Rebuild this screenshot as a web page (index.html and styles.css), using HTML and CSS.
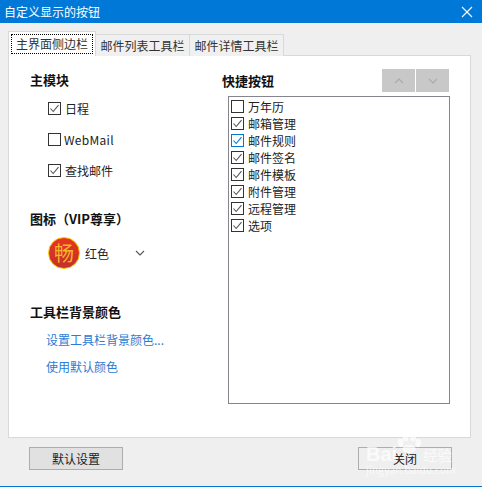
FILE: index.html
```html
<!DOCTYPE html>
<html lang="zh-CN">
<head>
    <meta charset="UTF-8">
    <title>自定义显示的按钮</title>
    <link rel="stylesheet" href="styles.css">
</head>
<body>
    <div class="titlebar">
        <span>自定义显示的按钮</span>
        <svg class="close-x" width="12" height="12" viewBox="0 0 12 12"><path d="M1 1L11 11M11 1L1 11" stroke="#fff" stroke-width="1.1" fill="none"/></svg>
    </div>

    <div class="tabs">
        <div class="tab active"><span class="focus">主界面侧边栏</span></div>
        <div class="tab">邮件列表工具栏</div>
        <div class="tab">邮件详情工具栏</div>
    </div>

    <div class="panel">
        <div class="col-left">
            <h3 class="head-main">主模块</h3>
            <div class="check-row">
                <svg class="box" viewBox="0 0 13 13"><rect x=".5" y=".5" width="12" height="12" fill="#fff" stroke="#333"/><path d="M2.5 6.5L5.2 9.5L10.5 3.2" fill="none" stroke="#555" stroke-width="1.1"/></svg>
                <span>日程</span>
            </div>
            <div class="check-row">
                <svg class="box" viewBox="0 0 13 13"><rect x=".5" y=".5" width="12" height="12" fill="#fff" stroke="#333"/></svg>
                <span class="latin">WebMail</span>
            </div>
            <div class="check-row">
                <svg class="box" viewBox="0 0 13 13"><rect x=".5" y=".5" width="12" height="12" fill="#fff" stroke="#333"/><path d="M2.5 6.5L5.2 9.5L10.5 3.2" fill="none" stroke="#555" stroke-width="1.1"/></svg>
                <span>查找邮件</span>
            </div>

            <h3 class="head-icon">图标（VIP尊享）</h3>
            <div class="icon-pick">
                <div class="badge">畅</div>
                <span class="badge-name">红色</span>
                <svg class="chevron" width="10" height="6" viewBox="0 0 10 6"><path d="M1 1L5 5L9 1" fill="none" stroke="#555" stroke-width="1.1"/></svg>
            </div>

            <h3 class="head-color">工具栏背景颜色</h3>
            <a class="link link-first">设置工具栏背景颜色...</a>
            <a class="link">使用默认颜色</a>
        </div>

        <div class="col-right">
            <div class="right-head">
                <h3>快捷按钮</h3>
                <div class="arrows">
                    <div class="arrow"><svg width="10" height="6" viewBox="0 0 10 6"><path d="M1 5L5 1L9 5" fill="none" stroke="#aaa" stroke-width="1.1"/></svg></div>
                    <div class="arrow"><svg width="10" height="6" viewBox="0 0 10 6"><path d="M1 1L5 5L9 1" fill="none" stroke="#aaa" stroke-width="1.1"/></svg></div>
                </div>
            </div>
            <div class="list">
                <div class="item"><svg class="box" viewBox="0 0 13 13"><rect x=".5" y=".5" width="12" height="12" fill="#fff" stroke="#333"/></svg><span>万年历</span></div>
                <div class="item"><svg class="box" viewBox="0 0 13 13"><rect x=".5" y=".5" width="12" height="12" fill="#fff" stroke="#333"/><path d="M2.5 6.5L5.2 9.5L10.5 3.2" fill="none" stroke="#555" stroke-width="1.1"/></svg><span>邮箱管理</span></div>
                <div class="item"><svg class="box" viewBox="0 0 13 13"><rect x=".5" y=".5" width="12" height="12" fill="#fff" stroke="#0078d7"/><path d="M2.5 6.5L5.2 9.5L10.5 3.2" fill="none" stroke="#0078d7" stroke-width="1.1"/></svg><span>邮件规则</span></div>
                <div class="item"><svg class="box" viewBox="0 0 13 13"><rect x=".5" y=".5" width="12" height="12" fill="#fff" stroke="#333"/><path d="M2.5 6.5L5.2 9.5L10.5 3.2" fill="none" stroke="#555" stroke-width="1.1"/></svg><span>邮件签名</span></div>
                <div class="item"><svg class="box" viewBox="0 0 13 13"><rect x=".5" y=".5" width="12" height="12" fill="#fff" stroke="#333"/><path d="M2.5 6.5L5.2 9.5L10.5 3.2" fill="none" stroke="#555" stroke-width="1.1"/></svg><span>邮件模板</span></div>
                <div class="item"><svg class="box" viewBox="0 0 13 13"><rect x=".5" y=".5" width="12" height="12" fill="#fff" stroke="#333"/><path d="M2.5 6.5L5.2 9.5L10.5 3.2" fill="none" stroke="#555" stroke-width="1.1"/></svg><span>附件管理</span></div>
                <div class="item"><svg class="box" viewBox="0 0 13 13"><rect x=".5" y=".5" width="12" height="12" fill="#fff" stroke="#333"/><path d="M2.5 6.5L5.2 9.5L10.5 3.2" fill="none" stroke="#555" stroke-width="1.1"/></svg><span>远程管理</span></div>
                <div class="item"><svg class="box" viewBox="0 0 13 13"><rect x=".5" y=".5" width="12" height="12" fill="#fff" stroke="#333"/><path d="M2.5 6.5L5.2 9.5L10.5 3.2" fill="none" stroke="#555" stroke-width="1.1"/></svg><span>选项</span></div>
            </div>
        </div>
    </div>

    <div class="footer">
        <button class="btn">默认设置</button>
        <button class="btn btn-close">关闭</button>
    </div>

    <!-- watermark over the close button -->
    <div class="watermark">
        <svg class="paw" width="26" height="20" viewBox="0 0 30 24" fill="#fff"><ellipse cx="5" cy="12" rx="3.5" ry="5"/><ellipse cx="11" cy="5" rx="3.5" ry="5"/><ellipse cx="20" cy="5" rx="3.5" ry="5"/><ellipse cx="26" cy="12" rx="3.5" ry="5"/><ellipse cx="15" cy="19" rx="8" ry="5"/></svg>
        <div class="wm-main"><span class="wm-bai">Bai</span><span class="wm-jy">经验</span></div>
        <div class="wm-url">jingyan.baidu.com</div>
    </div>
</body>
</html>
```

FILE: styles.css
```css
* {
    box-sizing: border-box;
}
html, body {
    height: 100%;
}
body {
    margin: 0;
    position: relative;
    overflow: hidden;
    background-color: #efefef;
    color: #222;
    font-family: "Noto Sans CJK SC", "Noto Sans", sans-serif;
    font-size: 12px;
    line-height: 17px;
    border-bottom: 1px solid #0078d7;
}
h3 {
    margin: 0;
    font-size: 13px;
    line-height: 18px;
    font-weight: bold;
    color: #111;
}

.titlebar {
    height: 23px;
    background-color: #0078d7;
    color: #fff;
    padding-left: 4px;
    display: flex;
    align-items: center;
    justify-content: space-between;
}
.close-x {
    margin-right: 9px;
}

.tabs {
    display: flex;
    align-items: flex-end;
    height: 33px;
    padding-left: 8px;
    margin-bottom: -1px;
    position: relative;
}
.tab {
    height: 22px;
    width: 95px;
    margin-left: -1px;
    border: 1px solid #d9d9d9;
    border-bottom: none;
    background: #f0f0f0;
    text-align: center;
    line-height: 22px;
    color: #333;
}
.tab.active {
    height: 25px;
    width: 88px;
    margin-left: 0;
    background: #fff;
    padding: 2px 2px 0;
    line-height: 17px;
    z-index: 1;
}
.focus {
    display: block;
    height: 20px;
    line-height: 18px;
    border: 1px dotted #000;
}

.panel {
    display: flex;
    height: 383px;
    margin: 0 11px 0 8px;
    background: #fff;
    border: 1px solid #d9d9d9;
}
.col-left {
    width: 213px;
    padding: 15px 0 0 21px;
}
.head-main {
    margin-bottom: 4px;
}
.check-row {
    display: flex;
    align-items: center;
    gap: 4px;
    height: 31px;
    padding-left: 18px;
}
.box {
    width: 13px;
    height: 13px;
    flex: none;
}
.latin {
    margin-left: -1px;
    letter-spacing: 0.3px;
}
.head-icon {
    margin-top: 24px;
}
.icon-pick {
    display: flex;
    align-items: center;
    height: 32px;
    margin-top: 9px;
    padding-left: 18px;
}
.badge {
    width: 32px;
    height: 32px;
    border-radius: 50%;
    border: 1px solid #f5c400;
    background: linear-gradient(#e8361f, #c2302c);
    color: #f7b52a;
    font-size: 20px;
    line-height: 29px;
    text-align: center;
}
.badge-name {
    margin-left: 5px;
    width: 50px;
}
.chevron {
    margin-left: 0;
}
.head-color {
    margin-top: 34px;
}
.link {
    display: block;
    margin-top: 10px;
    color: #2b7cd3;
    padding-left: 16px;
}
.link-first {
    margin-top: 10px;
}

.col-right {
    width: 228px;
    padding-top: 13px;
}
.right-head {
    display: flex;
    justify-content: space-between;
    align-items: center;
    height: 23px;
    margin-right: 1px;
}
.arrows {
    display: flex;
    gap: 1px;
}
.arrow {
    width: 33px;
    height: 23px;
    background: #c8c8c8;
    display: flex;
    align-items: center;
    justify-content: center;
}
.list {
    height: 308px;
    width: 222px;
    margin: 4px 0 0 6px;
    border: 1px solid #85858f;
    padding: 1px 2px;
}
.item {
    display: flex;
    align-items: center;
    gap: 4px;
    height: 17px;
}

.footer {
    display: flex;
    justify-content: space-between;
    padding: 9px 30px 0 29px;
}
.btn {
    width: 94px;
    height: 23px;
    padding: 0;
    border: 1px solid #adadad;
    background: #e1e1e1;
    color: #222;
    font: inherit;
}
.btn-close {
    background: #efefef;
}

.watermark {
    position: absolute;
    left: 364px;
    top: 433px;
    width: 96px;
    height: 50px;
    color: #fff;
    opacity: 0.7;
    pointer-events: none;
}
.paw {
    position: absolute;
    left: 32px;
    top: 0;
}
.wm-main {
    position: absolute;
    left: 2px;
    top: 9px;
    white-space: nowrap;
}
.wm-bai {
    font: bold 20px/24px "Liberation Sans", sans-serif;
}
.wm-jy {
    position: absolute;
    left: 57px;
    top: 3px;
    font-size: 14.5px;
    line-height: 20px;
    width: 40px;
}
.wm-url {
    position: absolute;
    left: 2px;
    top: 31px;
    font-size: 10px;
    line-height: 12px;
    letter-spacing: 0.2px;
    white-space: nowrap;
}
```
